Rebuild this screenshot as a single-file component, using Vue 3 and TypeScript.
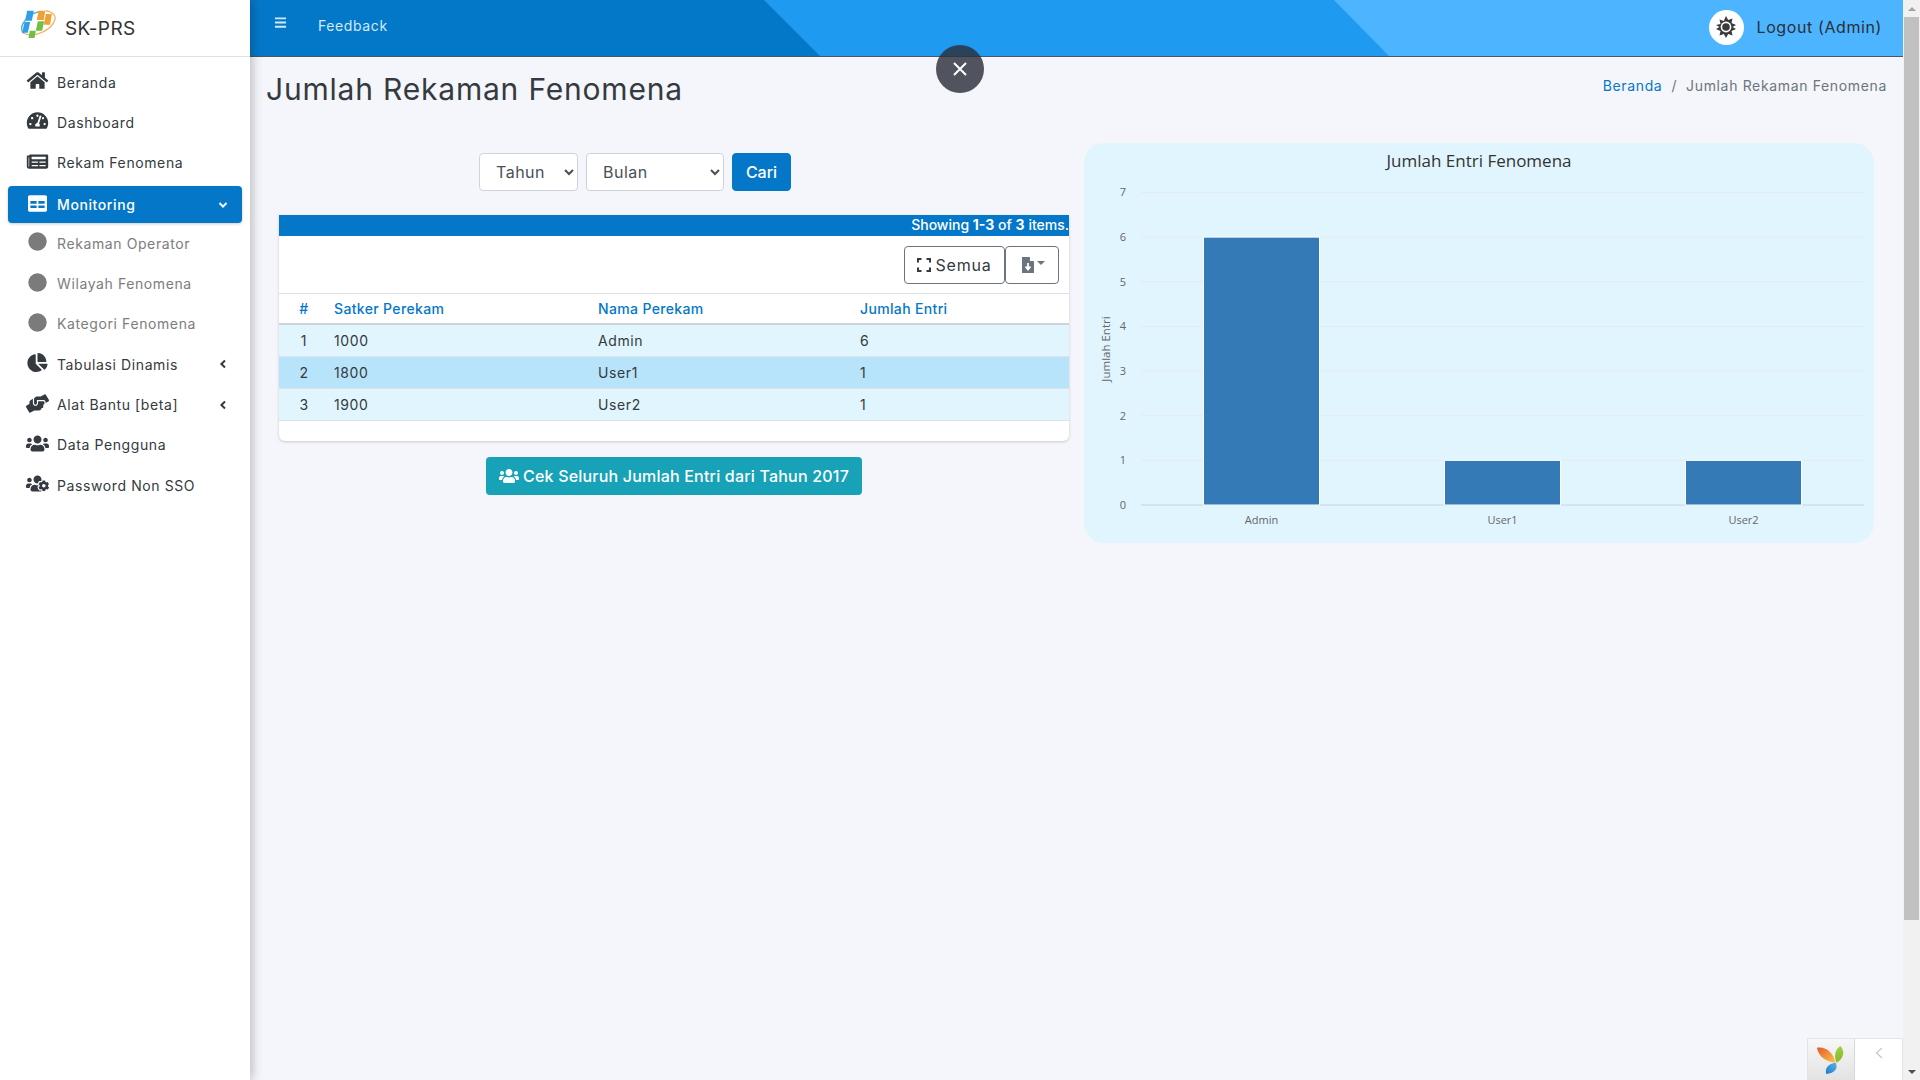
<script setup lang="ts">
interface NavItem {
  label: string;
  icon: string;
  active?: boolean;
  sub?: boolean;
  caret?: "down" | "left";
}

const icons: Record<string, { box: string; d: string }> = {
  home: {
    box: "0 0 576 512",
    d: "M280.37 148.26L96 300.11V464a16 16 0 0 0 16 16l112.06-.29a16 16 0 0 0 15.92-16V368a16 16 0 0 1 16-16h64a16 16 0 0 1 16 16v95.64a16 16 0 0 0 16 16.05L464 480a16 16 0 0 0 16-16V300L295.67 148.26a12.19 12.19 0 0 0-15.3 0zM571.6 251.47L488 182.56V44.05a12 12 0 0 0-12-12h-56a12 12 0 0 0-12 12v72.61L318.47 43a48 48 0 0 0-61 0L4.34 251.47a12 12 0 0 0-1.6 16.9l25.5 31A12 12 0 0 0 45.15 301l235.22-193.74a12.19 12.19 0 0 1 15.3 0L530.9 301a12 12 0 0 0 16.9-1.6l25.5-31a12 12 0 0 0-1.7-16.93z",
  },
  gauge: {
    box: "0 0 576 512",
    d: "M288 32C128.94 32 0 160.94 0 320c0 52.8 14.25 102.26 39.06 144.8 5.61 9.62 16.3 15.2 27.44 15.2h443c11.14 0 21.83-5.58 27.44-15.2C561.75 422.26 576 372.8 576 320c0-159.06-128.94-288-288-288zm0 64c14.71 0 26.58 10.13 30.32 23.65-1.11 2.26-2.64 4.23-3.45 6.67l-9.22 27.67c-5.13 3.49-10.97 6.01-17.64 6.01-17.67 0-32-14.33-32-32S270.33 96 288 96zM96 384c-17.67 0-32-14.33-32-32s14.33-32 32-32 32 14.33 32 32-14.33 32-32 32zm48-160c-17.67 0-32-14.33-32-32s14.33-32 32-32 32 14.33 32 32-14.33 32-32 32zm246.77-72.41l-61.33 184C343.13 347.33 352 364.54 352 384c0 11.72-3.38 22.55-8.88 32H232.88c-5.5-9.45-8.88-20.28-8.88-32 0-33.94 26.5-61.43 59.9-63.6l61.34-184.01c4.17-12.56 17.73-19.45 30.36-15.17 12.57 4.19 19.35 17.77 15.17 30.37zm14.66 57.2l15.52-46.55c3.47-1.29 7.13-2.23 11.05-2.23 17.67 0 32 14.33 32 32s-14.33 32-32 32c-11.38-.01-21.28-6.01-26.57-15.22zM480 384c-17.67 0-32-14.33-32-32s14.33-32 32-32 32 14.33 32 32-14.33 32-32 32z",
  },
  news: {
    box: "0 0 576 512",
    d: "M552 64H88c-13.255 0-24 10.745-24 24v8H24c-13.255 0-24 10.745-24 24v272c0 30.928 25.072 56 56 56h472c26.51 0 48-21.49 48-48V88c0-13.255-10.745-24-24-24zM56 400a8 8 0 0 1-8-8V144h16v248a8 8 0 0 1-8 8zm236-16H140c-6.627 0-12-5.373-12-12v-8c0-6.627 5.373-12 12-12h152c6.627 0 12 5.373 12 12v8c0 6.627-5.373 12-12 12zm208 0H348c-6.627 0-12-5.373-12-12v-8c0-6.627 5.373-12 12-12h152c6.627 0 12 5.373 12 12v8c0 6.627-5.373 12-12 12zm-208-96H140c-6.627 0-12-5.373-12-12v-8c0-6.627 5.373-12 12-12h152c6.627 0 12 5.373 12 12v8c0 6.627-5.373 12-12 12zm208 0H348c-6.627 0-12-5.373-12-12v-8c0-6.627 5.373-12 12-12h152c6.627 0 12 5.373 12 12v8c0 6.627-5.373 12-12 12zm0-96H140c-6.627 0-12-5.373-12-12v-40c0-6.627 5.373-12 12-12h360c6.627 0 12 5.373 12 12v40c0 6.627-5.373 12-12 12z",
  },
  grid: {
    box: "0 0 512 512",
    d: "M464 32H48C21.49 32 0 53.49 0 80v352c0 26.51 21.49 48 48 48h416c26.51 0 48-21.49 48-48V80c0-26.51-21.49-48-48-48zM64 190h168v70H64zm216 0h168v70H280zM64 310h168v70H64zm216 0h168v70H280z",
  },
  circle: {
    box: "0 0 512 512",
    d: "M256 8a248 248 0 1 0 0 496 248 248 0 0 0 0-496z",
  },
  pie: {
    box: "0 0 544 512",
    d: "M527.79 288H290.5l158.03 158.03c6.04 6.04 15.98 6.54 22.19.69 38.7-36.46 65.32-85.61 73.13-140.86 1.34-9.46-6.51-17.86-16.06-17.86zm-15.83-64.8C503.72 103.74 408.26 8.28 288.8.04 279.68-.59 272 7.1 272 16.24V240h223.77c9.14 0 16.82-7.68 16.19-16.8zM224 288V50.71c0-9.55-8.4-17.4-17.85-16.06C86.99 51.49-4.1 155.6.14 280.37 4.5 408.51 114.83 513.59 243.03 511.98c50.4-.63 96.97-16.87 135.26-44.03 7.9-5.6 8.42-17.23 1.57-24.08L224 288z",
  },
  hands: {
    box: "0 0 640 512",
    d: "M488 192H336v56c0 39.7-32.3 72-72 72s-72-32.3-72-72V126.4l-64.9 39C107.8 176.9 96 197.8 96 220.2v47.3l-80 46.2C.7 322.5-4.6 342.1 4.3 357.4l80 138.6c8.8 15.3 28.4 20.5 43.7 11.7L231.4 448H368c35.3 0 64-28.7 64-64h16c17.7 0 32-14.3 32-32v-64h8c13.3 0 24-10.7 24-24v-48c0-13.3-10.7-24-24-24zm147.7-37.4L555.7 16C546.9.7 527.3-4.5 512 4.3L408.6 64H306.4c-12 0-23.7 3.4-33.9 9.7L239 94.6c-9.4 5.8-15 16.1-15 27.1V248c0 22.1 17.9 40 40 40s40-17.9 40-40v-88h184c30.9 0 56 25.1 56 56v28.5l80-46.2c15.3-8.9 20.5-28.4 11.7-43.7z",
  },
  users: {
    box: "0 0 640 512",
    d: "M96 224c35.3 0 64-28.7 64-64s-28.7-64-64-64-64 28.7-64 64 28.7 64 64 64zm448 0c35.3 0 64-28.7 64-64s-28.7-64-64-64-64 28.7-64 64 28.7 64 64 64zm32 32h-64c-17.6 0-33.5 7.1-45.1 18.6 40.3 22.1 68.9 62 75.1 109.4h66c17.7 0 32-14.3 32-32v-32c0-35.3-28.7-64-64-64zm-256 0c61.9 0 112-50.1 112-112S381.9 32 320 32 208 82.1 208 144s50.1 112 112 112zm76.8 32h-8.3c-20.8 10-43.9 16-68.5 16s-47.6-6-68.5-16h-8.3C179.6 288 128 339.6 128 403.2V432c0 26.5 21.5 48 48 48h288c26.5 0 48-21.5 48-48v-28.8c0-63.6-51.6-115.2-115.2-115.2zm-223.7-13.4C161.5 263.1 145.6 256 128 256H64c-35.3 0-64 28.7-64 64v32c0 17.7 14.3 32 32 32h65.9c6.3-47.4 34.9-87.3 75.2-109.4z",
  },
  userscog: {
    box: "0 0 640 512",
    d: "M610.5 341.3c2.6-14.1 2.6-28.5 0-42.6l25.8-14.9c3-1.7 4.3-5.2 3.3-8.5-6.7-21.6-18.2-41.2-33.2-57.4-2.3-2.5-6-3.1-9-1.4l-25.8 14.9c-10.9-9.3-23.4-16.5-36.9-21.3v-29.8c0-3.4-2.4-6.4-5.7-7.1-22.3-5-45-4.8-66.2 0-3.3.7-5.7 3.7-5.7 7.1v29.8c-13.5 4.8-26 12-36.9 21.3l-25.8-14.9c-2.9-1.7-6.7-1.1-9 1.4-15 16.2-26.5 35.8-33.2 57.4-1 3.3.4 6.8 3.3 8.5l25.8 14.9c-2.6 14.1-2.6 28.5 0 42.6l-25.8 14.9c-3 1.7-4.3 5.2-3.3 8.5 6.7 21.6 18.2 41.1 33.2 57.4 2.3 2.5 6 3.1 9 1.4l25.8-14.9c10.9 9.3 23.4 16.5 36.9 21.3v29.8c0 3.4 2.4 6.4 5.7 7.1 22.3 5 45 4.8 66.2 0 3.3-.7 5.7-3.7 5.7-7.1v-29.8c13.5-4.8 26-12 36.9-21.3l25.8 14.9c2.9 1.7 6.7 1.1 9-1.4 15-16.2 26.5-35.8 33.2-57.4 1-3.3-.4-6.8-3.3-8.5l-25.8-14.9zM496 368.5c-26.8 0-48.5-21.8-48.5-48.5s21.8-48.5 48.5-48.5 48.5 21.8 48.5 48.5-21.7 48.5-48.5 48.5zM96 224c35.3 0 64-28.7 64-64s-28.7-64-64-64-64 28.7-64 64 28.7 64 64 64zm224 32c1.9 0 3.7-.5 5.6-.6 8.3-21.7 20.5-42.1 36.3-59.2 7.4-8 17.9-12.6 28.9-12.6 6.9 0 13.7 1.8 19.6 5.3l7.9 4.6c.8-.5 1.6-.9 2.4-1.4 7-14.6 11.2-30.8 11.2-48 0-61.9-50.1-112-112-112S208 82.1 208 144c0 61.9 50.1 112 112 112zm105.2 194.5c-2.3-1.2-4.6-2.6-6.8-3.9-8.2 4.8-15.3 9.8-27.5 9.8-10.9 0-21.4-4.6-28.9-12.6-18.3-19.8-32.3-43.9-40.2-69.6-10.7-34.5 24.9-49.7 25.8-50.3-.1-2.6-.1-5.2 0-7.8l-7.9-4.6c-3.8-2.2-7-5-9.8-8.1-3.3.2-6.5.6-9.8.6-24.6 0-47.6-6-68.5-16h-8.3C179.6 288 128 339.6 128 403.2V432c0 26.5 21.5 48 48 48h255.4c-3.7-6-6.2-12.8-6.2-20.3v-9.2zM173.1 274.6C161.5 263.1 145.6 256 128 256H64c-35.3 0-64 28.7-64 64v32c0 17.7 14.3 32 32 32h65.9c6.3-47.4 34.9-87.3 75.2-109.4z",
  },
};

const menu: NavItem[] = [
  { label: "Beranda", icon: "home" },
  { label: "Dashboard", icon: "gauge" },
  { label: "Rekam Fenomena", icon: "news" },
  { label: "Monitoring", icon: "grid", active: true, caret: "down" },
  { label: "Rekaman Operator", icon: "circle", sub: true },
  { label: "Wilayah Fenomena", icon: "circle", sub: true },
  { label: "Kategori Fenomena", icon: "circle", sub: true },
  { label: "Tabulasi Dinamis", icon: "pie", caret: "left" },
  { label: "Alat Bantu [beta]", icon: "hands", caret: "left" },
  { label: "Data Pengguna", icon: "users" },
  { label: "Password Non SSO", icon: "userscog" },
];

const rows = [
  { no: 1, satker: "1000", nama: "Admin", jumlah: 6 },
  { no: 2, satker: "1800", nama: "User1", jumlah: 1 },
  { no: 3, satker: "1900", nama: "User2", jumlah: 1 },
];

// chart geometry, in the svg's own coordinates
const baseY = 362;
const unit = 44.65;
const ticks = [0, 1, 2, 3, 4, 5, 6, 7];
const bars = [
  { name: "Admin", x: 119.5, value: 6 },
  { name: "User1", x: 360.5, value: 1 },
  { name: "User2", x: 601.5, value: 1 },
];
</script>

<template>
  <div class="shell">
    <aside class="sidebar">
      <div class="brand">
        <svg class="brand-logo" viewBox="0 0 110 84">
          <path d="M10 70C-8 50 22 12 58 5" fill="none" stroke="#4aaee6" stroke-width="4" />
          <path d="M10 70c30 14 84-8 94-40 4-14-6-24-28-28" fill="none" stroke="#f0b05a" stroke-width="3.500" />
          <path d="M21 2h20l-6 30H15zM13 36h17l-7 32H6z" fill="#2f9fe6" />
          <path d="M53 34h19l-6 28H47zM29 62h18l-4 22H25z" fill="#76bd43" />
          <path d="M55 2h20l-4 28H50zM77 12h18l-5 32H71z" fill="#f1a033" />
        </svg>
        <span class="brand-name">SK-PRS</span>
      </div>
      <nav class="nav">
        <a
          v-for="item in menu"
          :key="item.label"
          class="nav-row"
          :class="{ active: item.active, sub: item.sub }"
        >
          <svg class="nav-icon" :viewBox="icons[item.icon].box" preserveAspectRatio="xMidYMid meet">
            <path :d="icons[item.icon].d" fill="currentColor" fill-rule="evenodd" />
          </svg>
          <span class="nav-label">{{ item.label }}</span>
          <svg v-if="item.caret === 'down'" class="caret" viewBox="0 0 10 10">
            <path d="M1.500 3l3.500 3.600L8.500 3" fill="none" stroke="currentColor" stroke-width="2" />
          </svg>
          <svg v-if="item.caret === 'left'" class="caret" viewBox="0 0 10 10">
            <path d="M7 1.500L3.400 5 7 8.500" fill="none" stroke="currentColor" stroke-width="2" />
          </svg>
        </a>
      </nav>
    </aside>

    <main class="main">
      <header class="topbar">
        <i class="band band-mid"></i>
        <i class="band band-light"></i>
        <div class="top-left">
          <svg class="burger" viewBox="0 0 14 12">
            <path d="M1 1h12M1 5.500h12M1 10h12" stroke="#cfe6f7" stroke-width="2" />
          </svg>
          <a class="feedback">Feedback</a>
        </div>
        <div class="top-right">
          <span class="theme-btn">
            <svg viewBox="0 0 24 24" width="24" height="24">
              <path
                d="M12 1l2.200 4 4.300-1.500-1 4.400 4.500 2.100-3.400 2 3.400 2-4.500 2.100 1 4.400-4.300-1.500L12 23l-2.200-4-4.300 1.500 1-4.400-4.500-2.100 3.400-2-3.400-2L6.500 8.900l-1-4.400 4.300 1.500z"
                fill="#3b3b3b"
              />
              <circle cx="12" cy="12" r="5.400" fill="#fff" />
              <circle cx="12" cy="12" r="3.800" fill="#3b3b3b" />
            </svg>
          </span>
          <a class="logout">Logout (Admin)</a>
        </div>
      </header>

      <button class="close-btn" type="button" aria-label="Tutup">
        <svg viewBox="0 0 16 16" width="16" height="16">
          <path d="M2 2l12 12M14 2L2 14" stroke="#fff" stroke-width="2" />
        </svg>
      </button>

      <div class="page-head">
        <h1>Jumlah Rekaman Fenomena</h1>
        <div class="crumbs">
          <a>Beranda</a>
          <span class="sep">/</span>
          <span>Jumlah Rekaman Fenomena</span>
        </div>
      </div>

      <div class="columns">
        <section class="left">
          <form class="filter" @submit.prevent>
            <select class="sel sel-year"><option>Tahun</option></select>
            <select class="sel sel-month"><option>Bulan</option></select>
            <button class="btn-cari">Cari</button>
          </form>

          <div class="grid-card">
            <div class="summary">Showing <b>1-3</b> of <b>3</b> items.</div>
            <div class="toolbar">
              <button class="tool tool-all" type="button">
                <svg viewBox="0 0 14 14" width="14" height="14">
                  <path d="M1 4.500V1h3.500M9.500 1H13v3.500M13 9.500V13H9.500M4.500 13H1V9.500" fill="none" stroke="#343a40" stroke-width="2" />
                </svg>
                Semua
              </button>
              <button class="tool tool-export" type="button">
                <svg viewBox="0 0 12 16" width="12" height="16">
                  <path d="M0 0h7.500L12 4.500V16H0z" fill="#6c757d" />
                  <path d="M8 0l4 4H8z" fill="#fff" />
                  <path d="M6 6v6M3.500 9.500L6 12.500l2.500-3" fill="none" stroke="#fff" stroke-width="1.800" />
                </svg>
                <i class="tool-caret"></i>
              </button>
            </div>
            <table class="data">
              <colgroup>
                <col class="c-no" />
                <col class="c-satker" />
                <col class="c-nama" />
                <col />
              </colgroup>
              <thead>
                <tr>
                  <th class="center">#</th>
                  <th>Satker Perekam</th>
                  <th>Nama Perekam</th>
                  <th>Jumlah Entri</th>
                </tr>
              </thead>
              <tbody>
                <tr v-for="row in rows" :key="row.no">
                  <td class="center">{{ row.no }}</td>
                  <td>{{ row.satker }}</td>
                  <td>{{ row.nama }}</td>
                  <td>{{ row.jumlah }}</td>
                </tr>
              </tbody>
            </table>
          </div>

          <div class="cek-wrap">
            <button class="btn-cek" type="button">
              <svg :viewBox="icons.users.box" width="20" height="16">
                <path :d="icons.users.d" fill="#fff" />
              </svg>
              Cek Seluruh Jumlah Entri dari Tahun 2017
            </button>
          </div>
        </section>

        <section class="chart-card">
          <svg class="chart" viewBox="0 0 790 400" width="790" height="400">
            <text x="395" y="24" text-anchor="middle" class="c-title">Jumlah Entri Fenomena</text>
            <g v-for="t in ticks" :key="t">
              <line
                x1="57"
                x2="780"
                :y1="baseY - t * unit"
                :y2="baseY - t * unit"
                :stroke="t === 0 ? '#c3d4e6' : '#e6e9ee'"
                stroke-width="1"
              />
              <text x="42" :y="baseY - t * unit + 4" text-anchor="end" class="c-tick">{{ t }}</text>
            </g>
            <text class="c-axis" text-anchor="middle" transform="translate(26 206) rotate(-90)">Jumlah Entri</text>
            <g v-for="b in bars" :key="b.name">
              <rect
                :x="b.x"
                :y="baseY - b.value * unit"
                width="116"
                :height="b.value * unit"
                fill="#337ab7"
                stroke="#fff"
                stroke-width="1"
              />
              <text :x="b.x + 58" y="381" text-anchor="middle" class="c-tick">{{ b.name }}</text>
            </g>
          </svg>
        </section>
      </div>

      <div class="debug-bar">
        <span class="debug-logo">
          <svg viewBox="0 0 32 32" width="30" height="30">
            <defs>
              <linearGradient id="petal-o" x1="0" y1="0" x2="1" y2="1">
                <stop offset="0" stop-color="#e8572a" />
                <stop offset="1" stop-color="#f9c74f" />
              </linearGradient>
              <linearGradient id="petal-g" x1="0" y1="0" x2="0" y2="1">
                <stop offset="0" stop-color="#a3cf3f" />
                <stop offset="1" stop-color="#84b92f" />
              </linearGradient>
              <linearGradient id="petal-b" x1="1" y1="0" x2="0" y2="1">
                <stop offset="0" stop-color="#5ab0e8" />
                <stop offset="1" stop-color="#1f7cc9" />
              </linearGradient>
            </defs>
            <path d="M1 3C8 1 18 6 21 19 12 18 3 14 1 3z" fill="url(#petal-o)" />
            <path d="M26 1c5 5 4 13-4 18-3-7-2-14 4-18z" fill="url(#petal-g)" />
            <path d="M21 19c3 6-1 11-10 12-2-6 2-11 10-12z" fill="url(#petal-b)" />
          </svg>
        </span>
        <span class="debug-toggle">
          <svg viewBox="0 0 8 12" width="8" height="12">
            <path d="M7 1L1.500 6 7 11" fill="none" stroke="#c8c8c8" stroke-width="1.200" />
          </svg>
        </span>
      </div>
    </main>

    <div class="scrollbar">
      <i class="arrow arrow-up"></i>
      <div class="track"><div class="thumb"></div></div>
      <i class="arrow arrow-down"></i>
    </div>
  </div>
</template>

<style>
html,
body {
  margin: 0;
  height: 100%;
  overflow: hidden;
}
</style>

<style scoped>
* {
  box-sizing: border-box;
}
.shell {
  display: grid;
  grid-template-columns: 250px 1fr 17px;
  height: 1080px;
  overflow: hidden;
  background: #f4f6fb;
  font-family: Inter, "Liberation Sans", sans-serif;
  font-size: 14px;
  letter-spacing: 0.6px;
  color: #343a40;
}

/* sidebar */
.sidebar {
  position: relative;
  z-index: 2;
  background: #fff;
  box-shadow: 2px 0 10px rgba(0, 0, 0, 0.25);
}
.brand {
  display: flex;
  align-items: center;
  gap: 8px;
  height: 57px;
  padding: 0 0 0 20px;
  border-bottom: 1px solid #dee2e6;
}
.brand-logo {
  width: 37px;
  height: 28px;
  margin-bottom: 9px;
}
.brand-name {
  font-size: 19px;
  letter-spacing: 0.4px;
  color: #333;
}
.nav {
  display: flex;
  flex-direction: column;
  padding-top: 5px;
}
.nav-row {
  display: flex;
  align-items: center;
  height: 40.3px;
  padding: 0 22px 0 26px;
  color: #343a40;
}
.nav-row.sub {
  color: #7d7d7d;
}
.nav-row.sub .nav-icon {
  color: #7b7b7b;
}
.nav-row.active {
  height: 37px;
  margin: 3.300px 8px 0;
  padding: 0 14px 0 18px;
  border-radius: 4px;
  background: #0477c9;
  color: #fff;
  font-weight: 500;
  box-shadow: 0 1px 3px rgba(0, 0, 0, 0.2);
}
.nav-icon {
  flex: none;
  width: 23px;
  height: 19px;
  margin-right: 8px;
  margin-top: -3px;
}
.nav-label {
  flex: 1;
}
.caret {
  flex: none;
  width: 10px;
  height: 10px;
}

/* top bar */
.main {
  position: relative;
  min-width: 0;
}
.topbar {
  position: relative;
  display: flex;
  align-items: center;
  justify-content: space-between;
  height: 57px;
  background: #0478c8;
  border-bottom: 1px solid #4b5563;
}
.band {
  position: absolute;
  inset: 0;
}
.band-mid {
  background: #1e9bf0;
  clip-path: polygon(514px 0, 100% 0, 100% 100%, 570px 100%);
}
.band-light {
  background: #4db5ff;
  clip-path: polygon(1084px 0, 100% 0, 100% 100%, 1139px 100%);
}
.top-left,
.top-right {
  position: relative;
  display: flex;
  align-items: center;
}
.top-left {
  padding-left: 24px;
  margin-top: -5px;
}
.burger {
  width: 13px;
  height: 12px;
  margin-top: -5px;
  margin-right: 31px;
}
.feedback {
  color: #d4e8f7;
  font-size: 14px;
}
.top-right {
  padding-right: 21px;
  margin-top: -2px;
}
.theme-btn {
  display: flex;
  align-items: center;
  justify-content: center;
  width: 35px;
  height: 35px;
  margin-right: 13px;
  border-radius: 50%;
  background: #fff;
}
.logout {
  font-size: 16px;
  color: #2b2f36;
}
.close-btn {
  position: absolute;
  z-index: 3;
  top: 45px;
  left: 686px;
  display: flex;
  align-items: center;
  justify-content: center;
  width: 48px;
  height: 48px;
  padding: 0;
  border: 0;
  border-radius: 50%;
  background: rgba(45, 48, 58, 0.82);
}

/* page head */
.page-head {
  display: flex;
  justify-content: space-between;
  height: 86px;
  padding: 12px 16px 0;
}
h1 {
  margin: 0;
  font-size: 30px;
  font-weight: 400;
  line-height: 40px;
  letter-spacing: 0.8px;
  color: #343a40;
}
.crumbs {
  display: flex;
  gap: 9px;
  padding-top: 7px;
  line-height: 20px;
  letter-spacing: 0.65px;
  color: #6c757d;
}
.crumbs a {
  color: #0477c9;
}

/* columns */
.columns {
  display: grid;
  grid-template-columns: 790px 790px;
  gap: 15px;
  padding: 0 29px;
}
.filter {
  display: flex;
  gap: 8px;
  margin: 10px 0 24px 200px;
}
.sel {
  height: 38px;
  padding: 0 0 0 12px;
  border: 1px solid #ced4da;
  border-radius: 4px;
  background: #fff;
  font: inherit;
  font-size: 16px;
  letter-spacing: 0.5px;
  color: #495057;
}
.sel-year {
  width: 99px;
}
.sel-month {
  width: 138px;
}
.btn-cari {
  width: 59px;
  height: 38px;
  padding: 0;
  border: 1px solid #0477c9;
  border-radius: 4px;
  background: #0477c9;
  font: inherit;
  font-size: 16px;
  font-weight: 500;
  color: #fff;
}

/* grid */
.grid-card {
  height: 226px;
  border-radius: 0 0 6px 6px;
  background: #fff;
  box-shadow: 0 1px 3px rgba(0, 0, 0, 0.18);
  overflow: hidden;
}
.summary {
  height: 21px;
  line-height: 20px;
  text-align: right;
  background: #0477c9;
  color: #fff;
  font-weight: 500;
  letter-spacing: 0;
}
.summary b {
  font-weight: 700;
}
.toolbar {
  display: flex;
  justify-content: flex-end;
  height: 58px;
  padding: 10px 10px 0 0;
  border-bottom: 1px solid #dee2e6;
}
.tool {
  display: flex;
  align-items: center;
  justify-content: center;
  height: 38px;
  padding: 0;
  border: 1px solid #6c757d;
  background: #fff;
  font: inherit;
  font-size: 16px;
  letter-spacing: 0.8px;
  color: #343a40;
}
.tool-all {
  gap: 4px;
  width: 101px;
  border-radius: 4px;
}
.tool-export {
  gap: 3px;
  width: 54px;
  padding-left: 2px;
  border-radius: 4px;
}
.tool-caret {
  width: 0;
  height: 0;
  margin-top: -5px;
  border: 4px solid transparent;
  border-top-color: #6c757d;
  border-bottom: 0;
}
.data {
  width: 100%;
  border-collapse: collapse;
  table-layout: fixed;
}
.c-no {
  width: 43px;
}
.c-satker {
  width: 264px;
}
.c-nama {
  width: 262px;
}
.data th,
.data td {
  padding: 0 12px;
  text-align: left;
}
.data th {
  height: 30px;
  border-bottom: 2px solid #cfd4da;
  color: #0477c9;
  font-weight: 500;
  letter-spacing: 0.35px;
}
.data td {
  height: 32px;
  border-bottom: 1px solid #dee2e6;
  background: #e1f5fe;
  color: #343a40;
}
.data tbody tr:nth-child(2) td {
  background: #b8e4fb;
}
.data .center {
  text-align: center;
  padding: 0 0 0 7px;
}
.cek-wrap {
  display: flex;
  justify-content: center;
  margin-top: 16px;
}
.btn-cek {
  display: flex;
  align-items: center;
  justify-content: center;
  gap: 4px;
  width: 376px;
  height: 38px;
  padding: 0;
  border: 0;
  border-radius: 4px;
  background: #17a2b8;
  font: inherit;
  font-size: 16px;
  font-weight: 500;
  letter-spacing: 0.2px;
  color: #fff;
}

/* chart */
.chart-card {
  height: 400px;
  border-radius: 20px;
  background: #e1f5fe;
  overflow: hidden;
}
.chart {
  display: block;
}
.c-title {
  font-family: "Open Sans", sans-serif;
  font-size: 17px;
  letter-spacing: 0;
  fill: #333;
}
.c-tick {
  font-family: "Open Sans", sans-serif;
  font-size: 11px;
  letter-spacing: 0;
  fill: #666;
}
.c-axis {
  font-family: "Open Sans", sans-serif;
  font-size: 11.5px;
  letter-spacing: 0;
  fill: #666;
}

/* debug toolbar */
.debug-bar {
  position: absolute;
  right: 0;
  bottom: 0;
  display: flex;
  width: 96px;
  height: 42px;
  border: 1px solid #e4e4e4;
  border-bottom: 0;
  background: #fff;
}
.debug-logo {
  display: flex;
  align-items: center;
  justify-content: center;
  width: 47px;
  border-right: 1px solid #d8d8d8;
  background: linear-gradient(#f7f7f7, #e3e3e3);
}
.debug-toggle {
  display: flex;
  justify-content: center;
  flex: 1;
  padding-top: 8px;
}

/* page scrollbar */
.scrollbar {
  display: flex;
  flex-direction: column;
  background: #f1f1f1;
}
.arrow {
  flex: none;
  display: flex;
  align-items: center;
  justify-content: center;
  height: 17px;
}
.arrow::before {
  content: "";
  border: 4px solid transparent;
}
.arrow-up::before {
  border-top: 0;
  border-bottom: 4px solid #a3a3a3;
}
.arrow-down::before {
  border-bottom: 0;
  border-top: 4px solid #505050;
}
.track {
  flex: 1;
  padding: 0 1px;
}
.thumb {
  height: 903px;
  background: #c1c1c1;
}
</style>
